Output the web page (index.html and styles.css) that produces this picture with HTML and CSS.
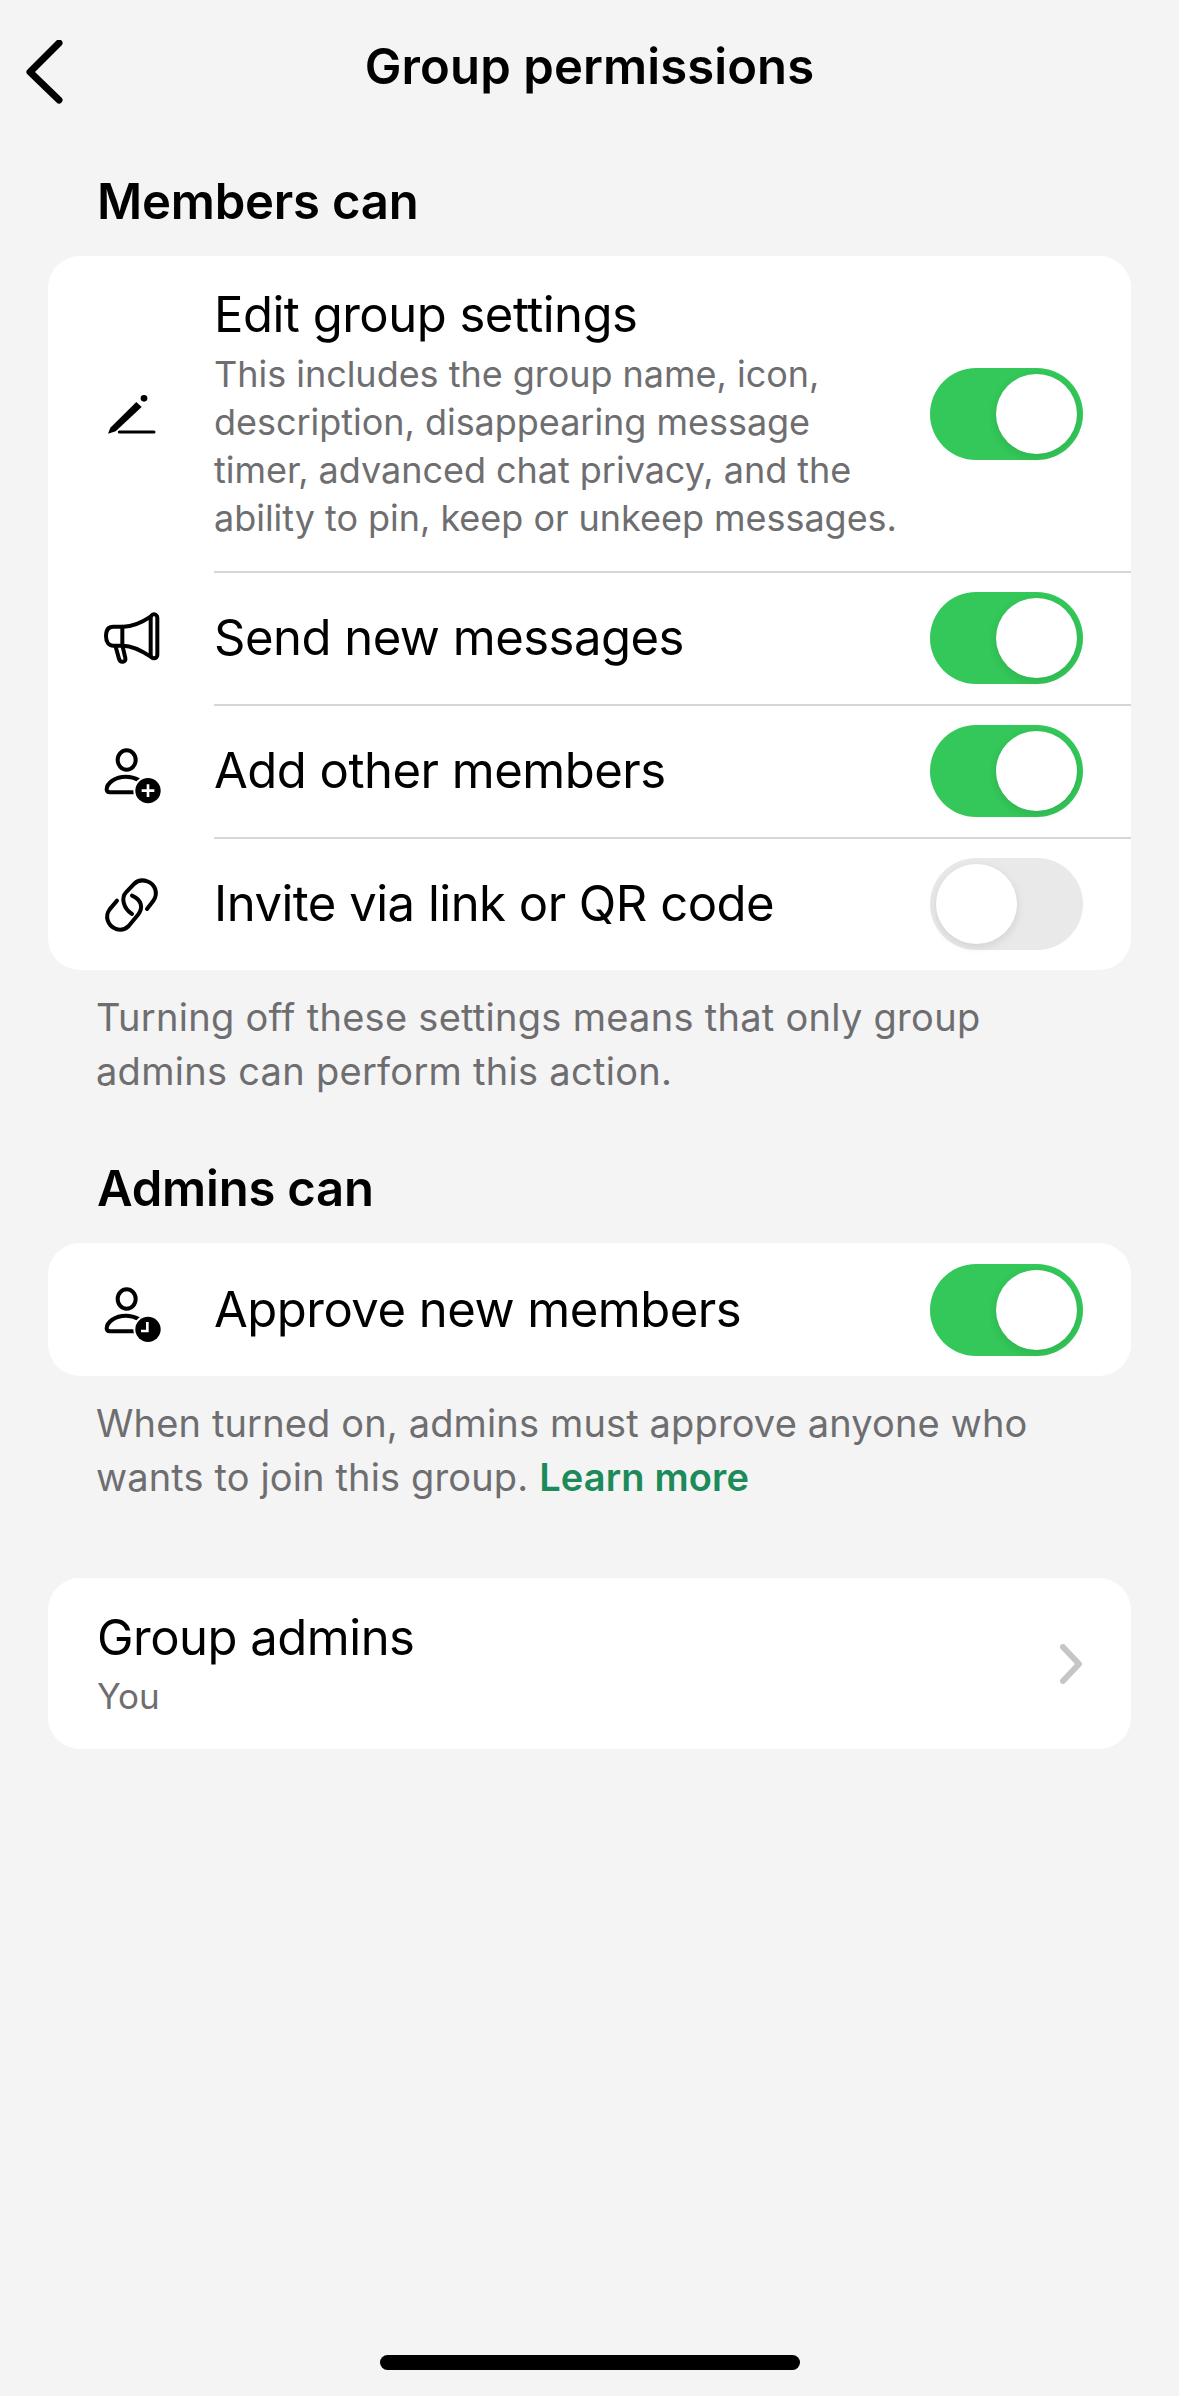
FILE: index.html
```html
<!DOCTYPE html>
<html lang="en">
<head>
	<meta charset="UTF-8">
	<title>Group permissions</title>
	<link rel="stylesheet" href="styles.css">
</head>
<body>
<div class="page">
	<header class="topbar">
		<svg class="back" viewBox="0 0 40 64"><path d="M33 3 L4 32 L33 60"/></svg>
		<h1>Group permissions</h1>
	</header>

	<h2 class="members-title">Members can</h2>
	<section class="card">
		<div class="row row-tall">
			<svg class="icon" viewBox="108 52 216 216">
				<path class="solid" d="M144 219 L151 201 L229 124 L245 139 L167 212 Z"/>
				<circle class="solid" cx="252" cy="113" r="10"/>
				<path class="line thin" d="M178 214 H282"/>
			</svg>
			<div class="row-body">
				<div class="row-title">Edit group settings</div>
				<p class="row-desc">This includes the group name, icon, description, disappearing message timer, advanced chat privacy, and the ability to pin, keep or unkeep messages.</p>
			</div>
			<div class="toggle on"><span class="knob"></span></div>
		</div>
		<div class="row">
			<svg class="icon" viewBox="108 66 216 216">
				<rect class="line" x="272" y="103" width="20" height="132" rx="10"/>
				<path class="line" d="M272 110 C245 128 215 140 190 140 L160 140 C146 140 138 150 138 168 C138 186 146 197 160 197 L190 197 C215 197 245 212 272 230"/>
				<path class="line" d="M187 140 V197"/>
				<path class="line" d="M167 200 L177 236 C181 250 199 247 196 234 L188 200"/>
			</svg>
			<div class="row-body"><div class="row-title">Send new messages</div></div>
			<div class="toggle on"><span class="knob"></span></div>
		</div>
		<div class="row">
			<svg class="icon" viewBox="108 73 216 216">
				<ellipse class="line" cx="200" cy="148" rx="27" ry="29"/>
				<path class="line" d="M236 208 C222 200 208 198 198 198 C165 198 140 218 140 236 C140 242 144 245 150 245 L226 245"/>
				<circle class="halo" cx="264" cy="240" r="44"/>
				<circle class="solid" cx="264" cy="240" r="38"/>
				<path class="cut" d="M264 221 V259 M245 240 H283"/>
			</svg>
			<div class="row-body"><div class="row-title">Add other members</div></div>
			<div class="toggle on"><span class="knob"></span></div>
		</div>
		<div class="row">
			<svg class="icon" viewBox="108 52 216 216">
				<path class="line" d="M261 175 L280 150 C296 128 285 100 262 92 C245 86 232 90 222 100 L198 125 C184 140 188 172 216 190"/>
				<path class="line" d="M171 150 L149 176 C134 196 142 224 168 235 C184 240 196 236 206 226 L234 192 C250 172 246 148 216 135"/>
			</svg>
			<div class="row-body"><div class="row-title">Invite via link or QR code</div></div>
			<div class="toggle"><span class="knob"></span></div>
		</div>
	</section>
	<p class="note">Turning off these settings means that only group admins can perform this action.</p>

	<h2 class="admins-title">Admins can</h2>
	<section class="card">
		<div class="row">
			<svg class="icon" viewBox="108 67 216 216">
				<ellipse class="line" cx="200" cy="142" rx="27" ry="29"/>
				<path class="line" d="M236 202 C222 194 208 192 198 192 C165 192 140 212 140 230 C140 236 144 239 150 239 L226 239"/>
				<circle class="halo" cx="264" cy="233" r="44"/>
				<circle class="solid" cx="264" cy="233" r="38"/>
				<path class="cut" d="M262 211 V238 H243"/>
			</svg>
			<div class="row-body"><div class="row-title">Approve new members</div></div>
			<div class="toggle on"><span class="knob"></span></div>
		</div>
	</section>
	<p class="note note-tight">When turned on, admins must approve anyone who wants to join this group. <a class="more">Learn more</a></p>

	<section class="card admins-card">
		<div class="admins-body">
			<div class="row-title">Group admins</div>
			<div class="admins-you">You</div>
		</div>
		<svg class="chevron" viewBox="0 0 24 40"><path d="M4 3 L20 20 L4 37"/></svg>
	</section>

	<div class="home-bar"></div>
</div>
</body>
</html>
```

FILE: styles.css
```css
* {
	margin: 0;
	padding: 0;
	box-sizing: border-box;
}

body {
	background: #f4f4f4;
	font-family: Inter, "Noto Sans", sans-serif;
	color: #000;
}

.page {
	display: flex;
	flex-direction: column;
	height: 2396px;
	padding: 0 48px;
}

.topbar {
	display: flex;
	align-items: center;
	justify-content: center;
	position: relative;
	height: 132px;
}

.topbar h1 {
	font-size: 49px;
	font-weight: 600;
	letter-spacing: 0.1px;
}

.back {
	position: absolute;
	left: -22px;
	top: 40px;
	width: 40px;
	height: 64px;
	fill: none;
	stroke: #000;
	stroke-width: 7;
	stroke-linecap: round;
	stroke-linejoin: round;
}

h2 {
	font-size: 49px;
	font-weight: 600;
	letter-spacing: -0.2px;
	line-height: 60px;
	padding-left: 49px;
}

.members-title {
	margin-top: 40px;
	margin-bottom: 24px;
}

.admins-title {
	margin-top: 61px;
	margin-bottom: 24px;
}

.card {
	background: #fff;
	border-radius: 32px;
}

.row {
	display: flex;
	align-items: center;
	height: 133px;
	padding: 0 48px;
	position: relative;
}

.row-tall {
	height: 315px;
}

/* 分割线 只画在文字右边 */
.row + .row::before {
	content: '';
	position: absolute;
	top: 0;
	left: 166px;
	right: 0;
	height: 2px;
	background: #d6d6d8;
}

.icon {
	width: 72px;
	height: 72px;
	flex: none;
	margin-right: 46px;
}

.line {
	fill: none;
	stroke: #000;
	stroke-width: 12;
	stroke-linecap: round;
	stroke-linejoin: round;
}

.thin {
	stroke-width: 9;
}

.solid {
	fill: #000;
}

.halo {
	fill: #fff;
}

.cut {
	fill: none;
	stroke: #fff;
	stroke-width: 8;
}

.row-body {
	flex: 1;
}

.row-title {
	font-size: 49px;
	font-weight: 400;
	line-height: 60px;
	letter-spacing: -0.5px;
}

.row-desc {
	margin-top: 5px;
	width: 700px;
	font-size: 36px;
	line-height: 48px;
	color: #6e6e70;
	letter-spacing: -0.03px;
}

.toggle {
	width: 153px;
	height: 92px;
	flex: none;
	padding: 6px;
	border-radius: 46px;
	background: #e9e9ea;
	display: flex;
}

.toggle.on {
	background: #34c759;
	justify-content: flex-end;
}

.knob {
	width: 81px;
	height: 80px;
	border-radius: 50%;
	background: #fff;
	box-shadow: 0 3px 10px rgba(0, 0, 0, 0.1);
}

.note {
	padding: 20px 48px 0;
	font-size: 38px;
	line-height: 54px;
	color: #6e6e70;
	letter-spacing: 0.28px;
}

.note-tight {
	letter-spacing: 0.14px;
}

.more {
	color: #1c8a59;
	font-weight: 600;
}

.admins-card {
	display: flex;
	align-items: center;
	justify-content: space-between;
	height: 171px;
	margin-top: 74px;
	padding: 0 48px 0 49px;
}

.admins-you {
	margin-top: 4px;
	font-size: 35px;
	line-height: 48px;
	color: #6e6e70;
}

.chevron {
	width: 24px;
	height: 40px;
	fill: none;
	stroke: #c6c6c8;
	stroke-width: 6;
	stroke-linecap: round;
	stroke-linejoin: round;
}

.home-bar {
	width: 420px;
	height: 15px;
	border-radius: 8px;
	background: #000;
	margin: auto auto 26px;
}
```
